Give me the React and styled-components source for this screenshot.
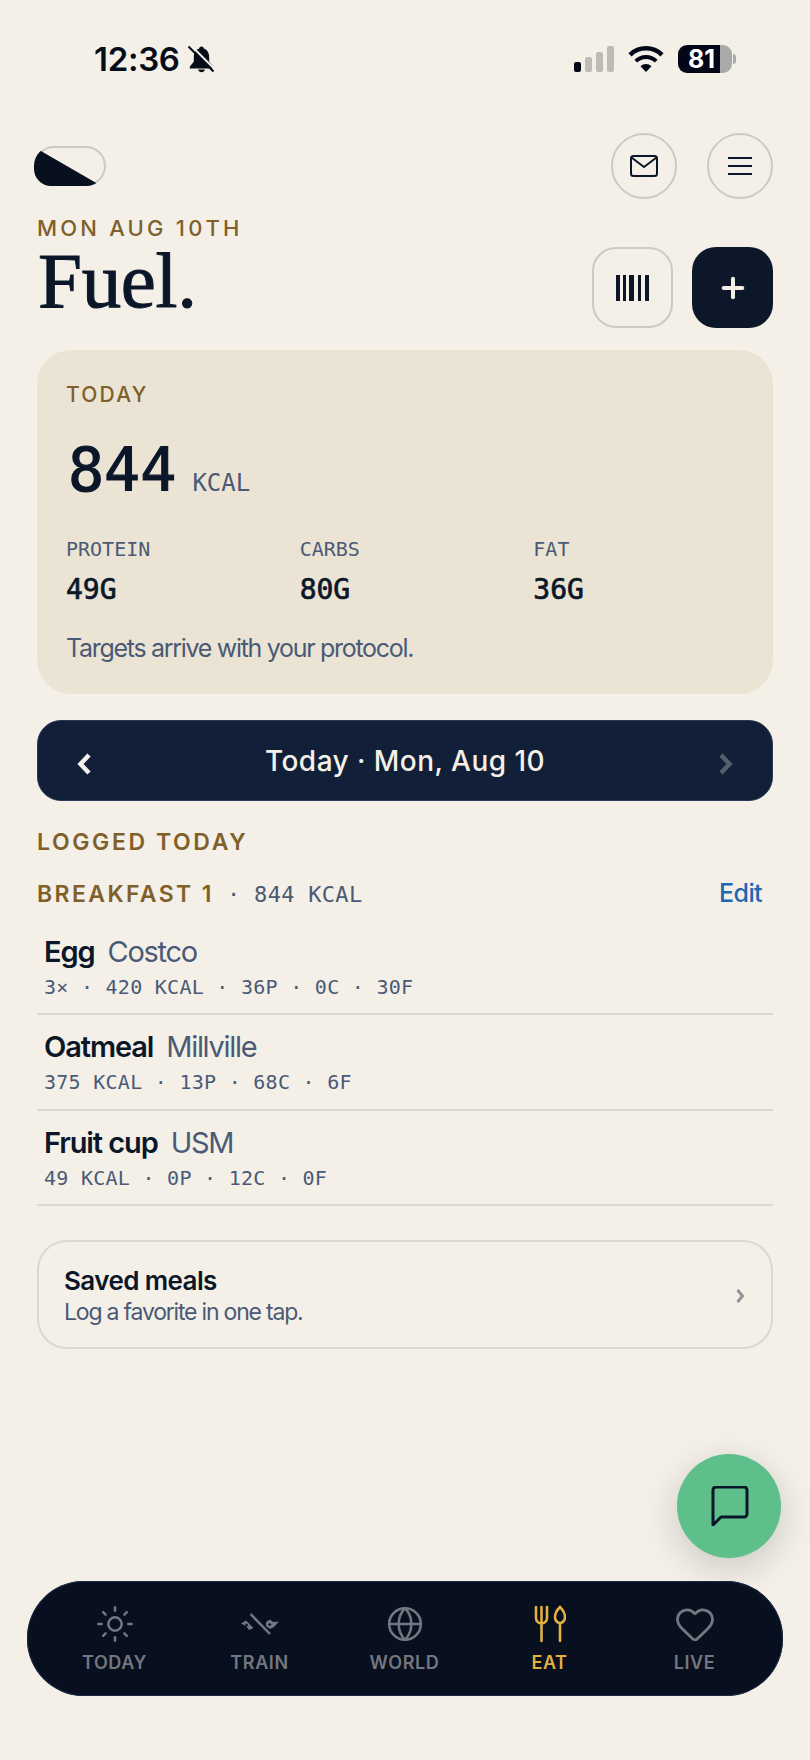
import React from "react";
import styled, { createGlobalStyle } from "styled-components";
import { Sun, Globe, Heart, Plus } from "lucide-react";

const colors = {
  bg: "#f4f0e8",
  card: "#ebe4d4",
  ink: "#0b1729",
  navy: "#112038",
  nav: "#081020",
  gold: "#7f5f2a",
  slate: "#4a5a76",
  line: "#dcd8cf",
  border: "#cdcac2",
  blue: "#1f66b5",
  green: "#5fbf8a",
  amber: "#e3b040",
  muted: "#74777f",
};

const sans = `Inter, "Liberation Sans", sans-serif`;
const mono = `"DejaVu Sans Mono", "Liberation Mono", monospace`;

const GlobalStyle = createGlobalStyle`
  html, body {
    margin: 0;
    background: ${colors.bg};
  }
  * {
    box-sizing: border-box;
  }
`;

const Page = styled.div`
  position: relative;
  width: 810px;
  height: 1760px;
  padding: 0 37px;
  overflow: hidden;
  background: ${colors.bg};
  font-family: ${sans};
  color: ${colors.ink};
`;

const StatusBar = styled.div`
  display: flex;
  align-items: center;
  justify-content: space-between;
  height: 133px;
  padding: 0 37px 15px 57px;
`;

const StatusGroup = styled.div`
  display: flex;
  align-items: center;
  gap: ${(p) => p.$gap || 0}px;
`;

const Clock = styled.span`
  font-size: 33px;
  font-weight: 600;
  letter-spacing: -0.3px;
  color: #060c18;
  line-height: 1;
`;

const BatteryBody = styled.div`
  display: flex;
  align-items: center;
  justify-content: center;
  width: 54px;
  height: 28px;
  padding-right: 7px;
  border-radius: 9px;
  background: linear-gradient(90deg, #020617 0 42px, #aaaaaa 42px);
  color: #fff;
  font-size: 25px;
  font-weight: 700;
`;

const BatteryTip = styled.div`
  width: 3px;
  height: 10px;
  margin-left: 1px;
  border-radius: 0 3px 3px 0;
  background: #aaaaaa;
`;

const TopRow = styled.div`
  display: flex;
  align-items: center;
  justify-content: space-between;
  height: 66px;
`;

const ThemeToggle = styled.div`
  position: relative;
  width: 72px;
  height: 40px;
  margin-left: -3px;
  border: 2px solid ${colors.border};
  border-radius: 20px;

  &::before {
    content: "";
    position: absolute;
    inset: -2px;
    border-radius: 20px 20px 20px 17px;
    background: ${colors.nav};
    clip-path: polygon(0 1px, 64px 38px, 62px 40px, 0 40px);
  }
`;

const IconRow = styled.div`
  display: flex;
  gap: ${(p) => p.$gap}px;
`;

const RoundButton = styled.div`
  display: flex;
  align-items: center;
  justify-content: center;
  width: 66px;
  height: 66px;
  border: 2px solid ${colors.border};
  border-radius: 50%;
`;

const TitleRow = styled.div`
  display: flex;
  align-items: flex-end;
  justify-content: space-between;
  height: 129px;
`;

const Eyebrow = styled.div`
  font-size: ${(p) => p.$size || 22}px;
  font-weight: ${(p) => p.$weight || 500};
  letter-spacing: ${(p) => p.$track || 3.2}px;
  line-height: 1;
  color: ${colors.gold};
`;

const TitleBlock = styled.div`
  align-self: flex-start;
  padding-top: 18px;
`;

const Title = styled.h1`
  margin: 4px 0 0 1px;
  font-family: "Liberation Serif", serif;
  font-size: 79px;
  font-weight: 400;
  line-height: 76px;
  letter-spacing: -0.3px;
  -webkit-text-stroke: 1px ${colors.ink};
  color: ${colors.ink};
`;

const SquareButton = styled.div`
  display: flex;
  align-items: center;
  justify-content: center;
  width: 81px;
  height: 81px;
  border-radius: 24px;
  border: ${(p) => (p.$dark ? "none" : `2px solid ${colors.border}`)};
  background: ${(p) => (p.$dark ? "#0c182a" : "transparent")};
  color: ${(p) => (p.$dark ? colors.bg : colors.ink)};
`;

const SummaryCard = styled.section`
  height: 344px;
  margin-top: 22px;
  padding: 34px 30px 0 29px;
  border-radius: 34px;
  background: ${colors.card};
`;

const KcalRow = styled.div`
  display: flex;
  align-items: baseline;
  gap: 16px;
  margin: 27px 0 0 2px;
`;

const KcalValue = styled.span`
  font-family: ${mono};
  font-size: 60px;
  font-weight: 400;
  line-height: 76px;
  -webkit-text-stroke: 1.2px ${colors.ink};
  color: ${colors.ink};
`;

const KcalUnit = styled.span`
  font-family: ${mono};
  font-size: 24px;
  color: ${colors.slate};
`;

const MacroGrid = styled.div`
  display: grid;
  grid-template-columns: repeat(3, 1fr);
  gap: 24px;
  margin-top: 29px;
`;

const MacroLabel = styled.div`
  font-family: ${mono};
  font-size: 20px;
  line-height: 24px;
  color: ${colors.slate};
`;

const MacroValue = styled.div`
  margin-top: 12px;
  font-family: ${mono};
  font-size: 28px;
  font-weight: 400;
  line-height: 34px;
  -webkit-text-stroke: 0.7px ${colors.ink};
  color: ${colors.ink};
`;

const CardNote = styled.p`
  margin: 25px 0 0;
  font-size: 25px;
  line-height: 32px;
  letter-spacing: -1.3px;
  color: ${colors.slate};
`;

const DayBar = styled.div`
  display: flex;
  align-items: center;
  justify-content: space-between;
  height: 81px;
  margin-top: 26px;
  padding: 0 38px;
  border: 1px solid #2a3a55;
  border-radius: 24px;
  background: ${colors.navy};
  color: ${colors.bg};
  font-size: 28px;
  font-weight: 500;
  letter-spacing: 0.45px;
`;

const DayArrow = styled.span`
  display: flex;
  margin-top: 6px;
  opacity: ${(p) => (p.$dim ? 0.3 : 1)};
`;

const SectionLabel = styled(Eyebrow)`
  margin-top: 30px;
`;

const MealHeader = styled.div`
  display: flex;
  align-items: baseline;
  justify-content: space-between;
  margin-top: 23.5px;
  padding-right: 11px;
  height: 42px;
`;

const MealName = styled.div`
  display: flex;
  align-items: baseline;
  font-size: 23px;
  font-weight: 600;
  letter-spacing: 2.4px;
  color: ${colors.gold};
`;

const MealKcal = styled.span`
  margin-left: 13px;
  font-family: ${mono};
  font-size: 22px;
  font-weight: 400;
  letter-spacing: 0.3px;
  color: ${colors.slate};
`;

const EditLink = styled.span`
  font-size: 25px;
  font-weight: 500;
  letter-spacing: -0.6px;
  color: ${colors.blue};
`;

const FoodRow = styled.div`
  height: 95.5px;
  padding: 14px 7px 0;
  border-bottom: 2px solid ${colors.line};
`;

const FoodTitle = styled.div`
  display: flex;
  align-items: baseline;
  gap: 13px;
  font-size: 29px;
  line-height: 36px;
`;

const FoodName = styled.span`
  font-weight: 600;
  letter-spacing: -1.1px;
  color: ${colors.ink};
`;

const FoodSource = styled.span`
  font-weight: 400;
  letter-spacing: -1.3px;
  color: ${colors.slate};
`;

const FoodMeta = styled.div`
  margin-top: 5px;
  font-family: ${mono};
  font-size: 20px;
  line-height: 24px;
  letter-spacing: 0.27px;
  color: ${colors.slate};
`;

const SavedCard = styled.div`
  display: flex;
  align-items: center;
  justify-content: space-between;
  height: 109px;
  margin-top: 34px;
  padding: 2px 26px 0 25px;
  border: 2px solid ${colors.line};
  border-radius: 30px;
`;

const SavedTitle = styled.div`
  margin-top: 1px;
  font-size: 26px;
  font-weight: 600;
  line-height: 32px;
  letter-spacing: -0.6px;
`;

const SavedNote = styled.div`
  font-size: 23px;
  line-height: 30px;
  letter-spacing: -1.2px;
  color: ${colors.slate};
`;

const ChatButton = styled.div`
  position: absolute;
  left: 677px;
  top: 1454px;
  display: flex;
  align-items: center;
  justify-content: center;
  width: 104px;
  height: 104px;
  border-radius: 50%;
  background: ${colors.green};
  box-shadow: 0 10px 34px rgba(11, 23, 41, 0.18);
`;

const TabBar = styled.nav`
  position: absolute;
  left: 27px;
  top: 1581px;
  display: grid;
  grid-template-columns: repeat(5, 145px);
  width: 756px;
  height: 115px;
  padding: 0 15px;
  border-radius: 57px;
  background: ${colors.nav};
  box-shadow: inset 0 0 0 1px #1a2a44;
`;

const Tab = styled.div`
  display: flex;
  flex-direction: column;
  align-items: center;
  padding-top: 23px;
  color: ${(p) => (p.$active ? colors.amber : colors.muted)};
`;

const TabIcon = styled.div`
  display: flex;
  align-items: center;
  justify-content: center;
  height: 40px;
`;

const TabLabel = styled.span`
  margin-top: 8px;
  font-size: 18px;
  font-weight: 600;
  letter-spacing: 0.6px;
  line-height: 22px;
`;

const BellOff = () => (
  <svg width="27" height="28" viewBox="0 0 27 28">
    <path
      d="M13.500 1.500c-1.300 0-2.200.9-2.200 2.100C7.500 4.800 5.800 8 5.800 12.500v4.300L1.800 21.500v2h23.400v-2l-4-4.700v-4.300c0-4.500-1.700-7.700-5.500-8.900 0-1.200-.9-2.100-2.200-2.100z"
      fill="#060c18"
    />
    <path d="M10 24.500c.4 1.500 1.800 2.800 3.500 2.800s3.100-1.300 3.500-2.800z" fill="#060c18" />
    <path d="M2.500 0 27 24.500" stroke={colors.bg} strokeWidth="2" />
    <path d="M0.500 1.500 25.500 26.500" stroke="#060c18" strokeWidth="2" />
  </svg>
);

const SignalBars = () => (
  <svg width="40" height="26" viewBox="0 0 40 26">
    <rect x="0" y="16" width="7" height="10" rx="2" fill="#020617" />
    <rect x="11" y="11" width="7" height="15" rx="2" fill="#bdbbb6" />
    <rect x="22" y="6" width="7" height="20" rx="2" fill="#bdbbb6" />
    <rect x="33" y="0" width="7" height="26" rx="2" fill="#bdbbb6" />
  </svg>
);

const WifiIcon = () => (
  <svg width="36" height="26" viewBox="0 0 36 26" fill="none">
    <path d="M18 26 12.500 20.200a8 8 0 0 1 11 0z" fill="#020617" />
    <path d="M7.800 15.200a14.500 14.500 0 0 1 20.400 0" stroke="#020617" strokeWidth="4" />
    <path d="M2 8.800a23 23 0 0 1 32 0" stroke="#020617" strokeWidth="4.500" />
  </svg>
);

const MailIcon = () => (
  <svg width="28" height="22" viewBox="0 0 28 22" fill="none" stroke={colors.ink} strokeWidth="2">
    <rect x="1" y="1" width="26" height="20" rx="2.500" />
    <path d="M1.500 2.500 14 12 26.500 2.500" />
  </svg>
);

const MenuIcon = () => (
  <svg width="24" height="18" viewBox="0 0 24 18" stroke={colors.ink} strokeWidth="2">
    <path d="M0 1h24M0 9h24M0 17h24" />
  </svg>
);

const BarcodeIcon = () => (
  <svg width="34" height="26" viewBox="0 0 34 26" fill={colors.ink}>
    <rect x="0" width="4" height="26" />
    <rect x="7" width="3" height="26" />
    <rect x="13" width="5" height="26" />
    <rect x="22" width="3" height="26" />
    <rect x="29" width="4" height="26" />
  </svg>
);

const ChevronLeft = () => (
  <svg width="16" height="22" viewBox="0 0 16 22" fill="none" stroke="currentColor" strokeWidth="4.500">
    <path d="M13 2 4.500 11l8.500 9" />
  </svg>
);

const ChevronRight = () => (
  <svg width="16" height="22" viewBox="0 0 16 22" fill="none" stroke="currentColor" strokeWidth="4.500">
    <path d="m3 2 8.500 9-8.500 9" />
  </svg>
);

const SmallChevron = () => (
  <svg width="9" height="16" viewBox="0 0 9 16" fill="none" stroke="#8f9299" strokeWidth="3">
    <path d="m1.500 2 5 6-5 6" />
  </svg>
);

const ChatIcon = () => (
  <svg width="40" height="40" viewBox="0 0 40 40" fill="none" stroke={colors.ink} strokeWidth="3" strokeLinejoin="round">
    <path d="M4 5a3 3 0 0 1 3-3h28a3 3 0 0 1 3 3v24a3 3 0 0 1-3 3H12l-8 8z" transform="translate(0 -1)" />
  </svg>
);

const FlagsIcon = () => (
  <svg width="38" height="22" viewBox="0 0 38 22" fill="currentColor">
    <path d="M9.500 1 29 21" fill="none" stroke="currentColor" strokeWidth="2.500" />
    <path
      fillRule="evenodd"
      d="M0 10.500 5 7.500 12.500 15 8 17 5 13zM5.500 10.500l-1.500 1 1.500 2 2-1z"
    />
    <path
      fillRule="evenodd"
      d="M25 9l4-2.500 3 2.500 6-.5-5 5.500-4 2-4-3zM28.500 10l-1.500 1.500 1.500 1.500 2-1.500z"
    />
  </svg>
);

const UtensilsIcon = () => (
  <svg width="32" height="38" viewBox="0 0 32 38" fill="none" stroke="currentColor" strokeWidth="2.600" strokeLinecap="round">
    <path d="M2 2v11a5.500 5.500 0 0 0 11 0V2M7.500 2v34" />
    <path d="M26 2c-3 3-5 7-5 10s2 6 5 6 5-3 5-6-2-7-5-10zM26 18v18" />
  </svg>
);

const foods = [
  { name: "Egg", source: "Costco", meta: "3× · 420 KCAL · 36P · 0C · 30F" },
  { name: "Oatmeal", source: "Millville", meta: "375 KCAL · 13P · 68C · 6F" },
  { name: "Fruit cup", source: "USM", meta: "49 KCAL · 0P · 12C · 0F" },
];

const macros = [
  { label: "PROTEIN", value: "49G" },
  { label: "CARBS", value: "80G" },
  { label: "FAT", value: "36G" },
];

const tabs = [
  { label: "TODAY", icon: <Sun size={40} strokeWidth={1.5} /> },
  { label: "TRAIN", icon: <FlagsIcon /> },
  { label: "WORLD", icon: <Globe size={38} strokeWidth={1.6} /> },
  { label: "EAT", icon: <UtensilsIcon />, active: true },
  { label: "LIVE", icon: <Heart size={42} strokeWidth={1.6} /> },
];

const App = () => (
  <Page>
    <GlobalStyle />
    <StatusBar>
      <StatusGroup $gap={8}>
        <Clock>12:36</Clock>
        <BellOff />
      </StatusGroup>
      <StatusGroup $gap={14}>
        <SignalBars />
        <WifiIcon />
        <StatusGroup>
          <BatteryBody>81</BatteryBody>
          <BatteryTip />
        </StatusGroup>
      </StatusGroup>
    </StatusBar>

    <TopRow>
      <ThemeToggle />
      <IconRow $gap={30}>
        <RoundButton>
          <MailIcon />
        </RoundButton>
        <RoundButton>
          <MenuIcon />
        </RoundButton>
      </IconRow>
    </TopRow>

    <TitleRow>
      <TitleBlock>
        <Eyebrow>MON AUG 10TH</Eyebrow>
        <Title>Fuel.</Title>
      </TitleBlock>
      <IconRow $gap={19}>
        <SquareButton>
          <BarcodeIcon />
        </SquareButton>
        <SquareButton $dark>
          <Plus size={32} strokeWidth={3} />
        </SquareButton>
      </IconRow>
    </TitleRow>

    <SummaryCard>
      <Eyebrow $size={21} $track={2.2}>TODAY</Eyebrow>
      <KcalRow>
        <KcalValue>844</KcalValue>
        <KcalUnit>KCAL</KcalUnit>
      </KcalRow>
      <MacroGrid>
        {macros.map((m) => (
          <div key={m.label}>
            <MacroLabel>{m.label}</MacroLabel>
            <MacroValue>{m.value}</MacroValue>
          </div>
        ))}
      </MacroGrid>
      <CardNote>Targets arrive with your protocol.</CardNote>
    </SummaryCard>

    <DayBar>
      <DayArrow>
        <ChevronLeft />
      </DayArrow>
      <span>Today · Mon, Aug 10</span>
      <DayArrow $dim>
        <ChevronRight />
      </DayArrow>
    </DayBar>

    <SectionLabel $size={23} $weight={600} $track={2.6}>LOGGED TODAY</SectionLabel>

    <MealHeader>
      <MealName>
        BREAKFAST 1
        <MealKcal>· 844 KCAL</MealKcal>
      </MealName>
      <EditLink>Edit</EditLink>
    </MealHeader>

    {foods.map((f) => (
      <FoodRow key={f.name}>
        <FoodTitle>
          <FoodName>{f.name}</FoodName>
          <FoodSource>{f.source}</FoodSource>
        </FoodTitle>
        <FoodMeta>{f.meta}</FoodMeta>
      </FoodRow>
    ))}

    <SavedCard>
      <div>
        <SavedTitle>Saved meals</SavedTitle>
        <SavedNote>Log a favorite in one tap.</SavedNote>
      </div>
      <SmallChevron />
    </SavedCard>

    <ChatButton>
      <ChatIcon />
    </ChatButton>

    <TabBar>
      {tabs.map((t) => (
        <Tab key={t.label} $active={t.active}>
          <TabIcon>{t.icon}</TabIcon>
          <TabLabel>{t.label}</TabLabel>
        </Tab>
      ))}
    </TabBar>
  </Page>
);

export default App;
